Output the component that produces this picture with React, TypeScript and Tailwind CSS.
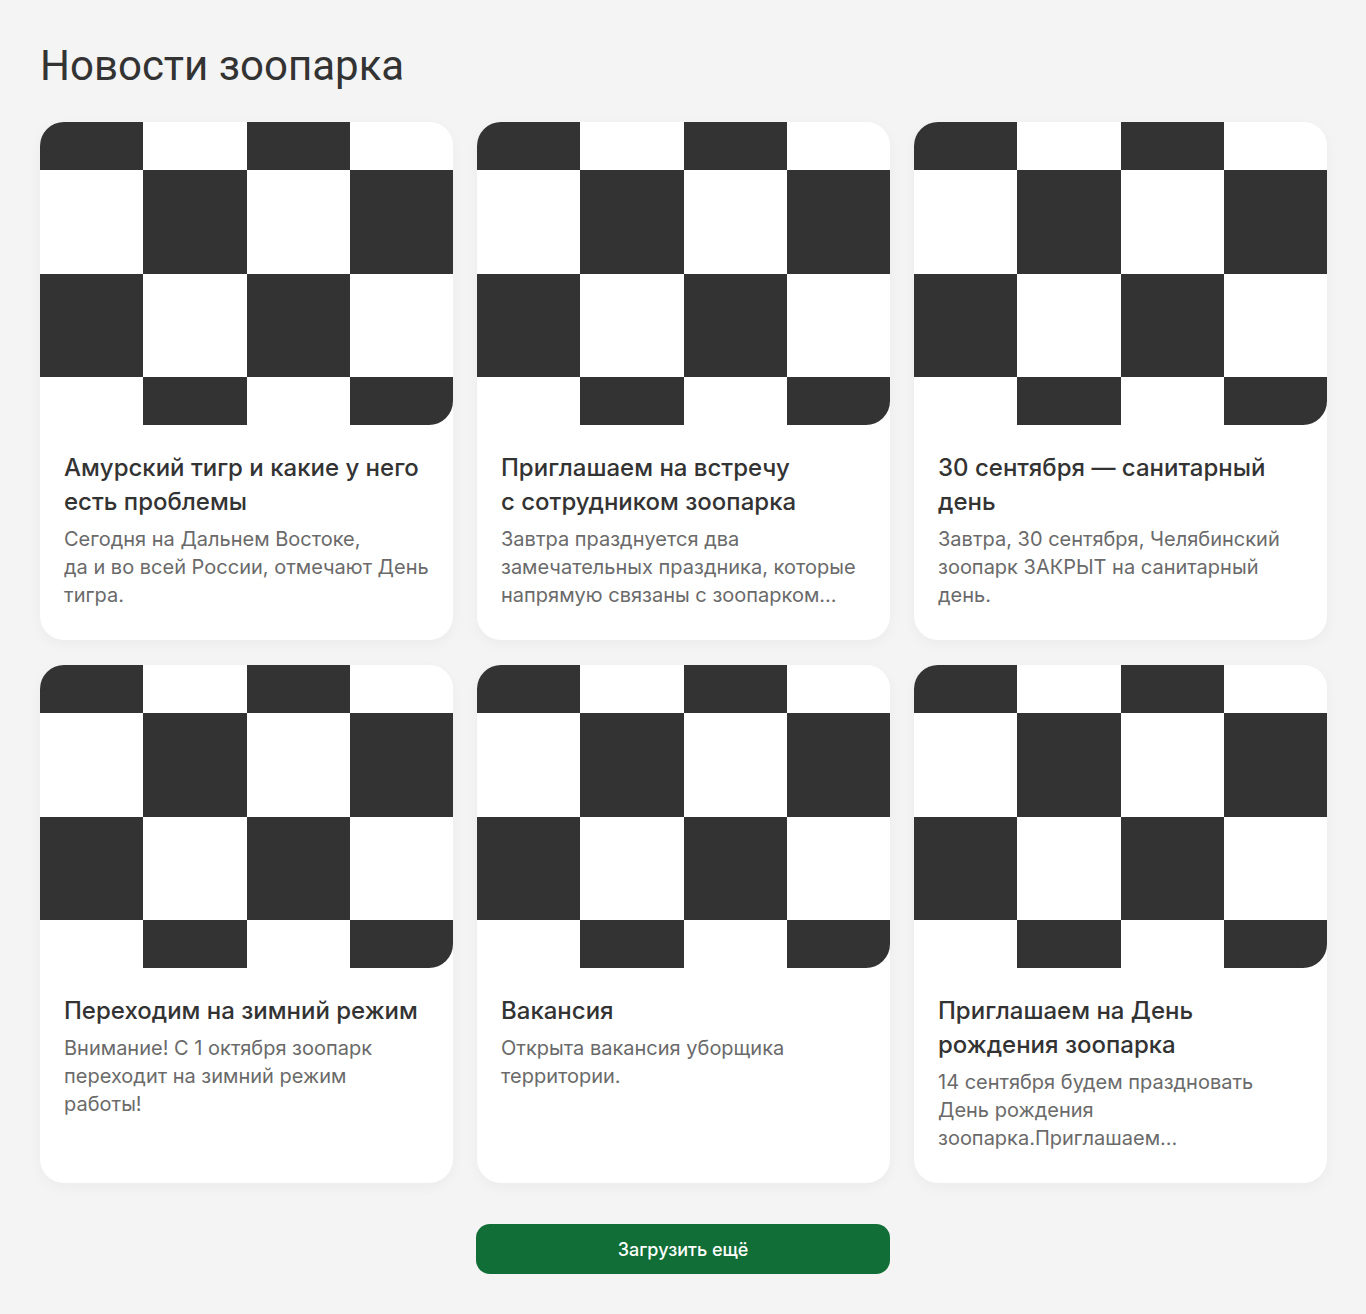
import React from "react";

type News = { title: string; text: string };

const NEWS: News[] = [
  {
    title: "Амурский тигр и какие у него есть проблемы",
    text: "Сегодня на Дальнем Востоке, да\u00A0и\u00A0во всей России, отмечают День тигра.",
  },
  {
    title: "Приглашаем на встречу с\u00A0сотрудником зоопарка",
    text: "Завтра празднуется два замечательных праздника, которые напрямую связаны с зоопарком...",
  },
  {
    title: "30 сентября — санитарный день",
    text: "Завтра, 30 сентября, Челябинский зоопарк ЗАКРЫТ на санитарный день.",
  },
  {
    title: "Переходим на зимний режим",
    text: "Внимание! С 1 октября зоопарк переходит на зимний режим\nработы!",
  },
  {
    title: "Вакансия",
    text: "Открыта вакансия уборщика территории.",
  },
  {
    title: "Приглашаем на День рождения зоопарка",
    text: "14 сентября будем праздновать День рождения зоопарка.Приглашаем...",
  },
];

// placeholder picture: 4x4 checkerboard, cropped like object-fit: cover
function Checker() {
  const cells = [];
  for (let r = 0; r < 4; r++) {
    for (let c = 0; c < 4; c++) {
      if ((r + c) % 2 === 0) cells.push(<rect key={`${r}-${c}`} x={c} y={r} width={1} height={1} fill="#333333" />);
    }
  }
  return (
    <div className="h-[303px] rounded-3xl overflow-hidden bg-white">
      <svg width="100%" height="100%" viewBox="0 0 4 4" preserveAspectRatio="xMidYMid slice" shapeRendering="crispEdges">
        {cells}
      </svg>
    </div>
  );
}

function Card({ item }: { item: News }) {
  return (
    <div className="bg-white rounded-3xl shadow-[0_4px_14px_rgba(0,0,0,0.04)] flex flex-col">
      <Checker />
      <div className="pl-6 pr-5 pt-[26px] pb-[31px]">
        <h3 className="text-[24px] leading-[34px] text-[#333333] font-medium">{item.title}</h3>
        <p className="mt-[6px] text-[20px] leading-7 text-[#6a6a6a] whitespace-pre-line">{item.text}</p>
      </div>
    </div>
  );
}

export default function App() {
  return (
    <div className="min-h-[1314px] bg-[#f4f4f4] px-10 pt-10 pb-10 font-['Inter',sans-serif]">
      <h1 className="text-[42px] leading-[52px] text-[#333333] font-['Roboto',sans-serif] font-normal mb-[30px]">Новости зоопарка</h1>
      <div className="grid grid-cols-[413px_413px_413px] gap-x-6 gap-y-[25px]">
        {NEWS.map((n, i) => (
          <Card key={i} item={n} />
        ))}
      </div>
      <div className="w-[1286px] flex justify-center mt-[41px]">
        <button className="w-[414px] h-[50px] rounded-[14px] bg-[#106e36] text-white text-[18px] font-medium">Загрузить ещё</button>
      </div>
    </div>
  );
}
